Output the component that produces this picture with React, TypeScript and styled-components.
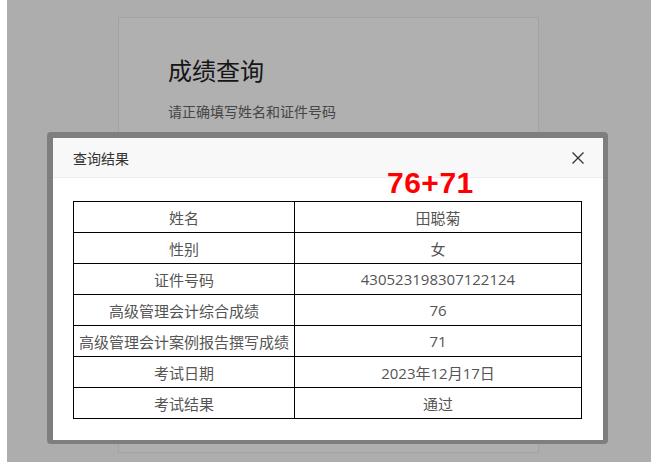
import * as React from 'react'

import styled, { createGlobalStyle } from 'styled-components'

const GlobalStyle = createGlobalStyle`
  html, body {
    margin: 0;
    padding: 0;
    background: #ffffff;
  }
  body {
    font-family: "Open Sans", "Noto Sans CJK SC", sans-serif;
  }
`

const Screen = styled.div`
  position: relative;
  margin: 0 6px 0 7px;
  height: 462px;
  overflow: hidden;
  background: #fbfbfb;
  padding-top: 17px;
  box-sizing: border-box;
`

const Card = styled.div`
  margin-left: 111px;
  width: 421px;
  height: 436px;
  box-sizing: border-box;
  background: #ffffff;
  border: 1px solid #ebebeb;
  padding: 37px 49px;
`

const Title = styled.h1`
  margin: 0;
  font-size: 24px;
  font-weight: 400;
  line-height: 32px;
  color: #222;
`

const Subtitle = styled.p`
  margin: 15px 0 0;
  font-size: 14px;
  line-height: 20px;
  color: #666;
`

const Mask = styled.div`
  position: absolute;
  inset: 0;
  background: rgba(0, 0, 0, 0.31);
`

const Modal = styled.div`
  position: absolute;
  left: 40px;
  top: 132px;
  width: 550px;
  background: #ffffff;
  border: solid #7e7e7e;
  border-width: 6px 5px 4px 6px;
  border-radius: 4px;
`

const ModalHeader = styled.div`
  height: 39px;
  display: flex;
  align-items: center;
  justify-content: space-between;
  padding: 0 19px 0 20px;
  background: #f8f8f8;
  border-bottom: 1px solid #ececec;
`

const ModalTitle = styled.span`
  font-size: 14px;
  color: #333;
`

const CloseButton = styled.button`
  border: none;
  background: none;
  padding: 0;
  width: 12px;
  height: 12px;
  display: flex;
  cursor: pointer;
`

const ModalBody = styled.div`
  padding: 23px 20px 21px;
`

const ResultTable = styled.table`
  width: 509px;
  border-collapse: collapse;
  table-layout: fixed;
`

const Cell = styled.td`
  height: 30px;
  padding: 0;
  border: 1px solid #000;
  text-align: center;
  font-size: 15px;
  color: #555;
  white-space: nowrap;
`

const Score = styled.div`
  position: absolute;
  left: 380px;
  top: 168px;
  font-family: "Liberation Sans", Arial, sans-serif;
  font-weight: 700;
  font-size: 30px;
  letter-spacing: 0.5px;
  line-height: 1;
  color: #ff0000;
`

const rows: [string, string][] = [
  ['姓名', '田聪菊'],
  ['性别', '女'],
  ['证件号码', '430523198307122124'],
  ['高级管理会计综合成绩', '76'],
  ['高级管理会计案例报告撰写成绩', '71'],
  ['考试日期', '2023年12月17日'],
  ['考试结果', '通过'],
]

export default function App() {
  return (
    <>
      <GlobalStyle />
      <Screen>
        <Card>
          <Title>成绩查询</Title>
          <Subtitle>请正确填写姓名和证件号码</Subtitle>
        </Card>
        <Mask />
        <Modal>
          <ModalHeader>
            <ModalTitle>查询结果</ModalTitle>
            <CloseButton aria-label='关闭'>
              <svg width='12' height='12' viewBox='0 0 12 12'>
                <path d='M0.5 0.5 L11.5 11.5 M11.5 0.5 L0.5 11.5' stroke='#333' strokeWidth='1.3' fill='none' />
              </svg>
            </CloseButton>
          </ModalHeader>
          <ModalBody>
            <ResultTable>
              <colgroup>
                <col style={{ width: 221 }} />
                <col />
              </colgroup>
              <tbody>
                {rows.map(([label, value]) => (
                  <tr key={label}>
                    <Cell>{label}</Cell>
                    <Cell>{value}</Cell>
                  </tr>
                ))}
              </tbody>
            </ResultTable>
          </ModalBody>
        </Modal>
        <Score>76+71</Score>
      </Screen>
    </>
  )
}
